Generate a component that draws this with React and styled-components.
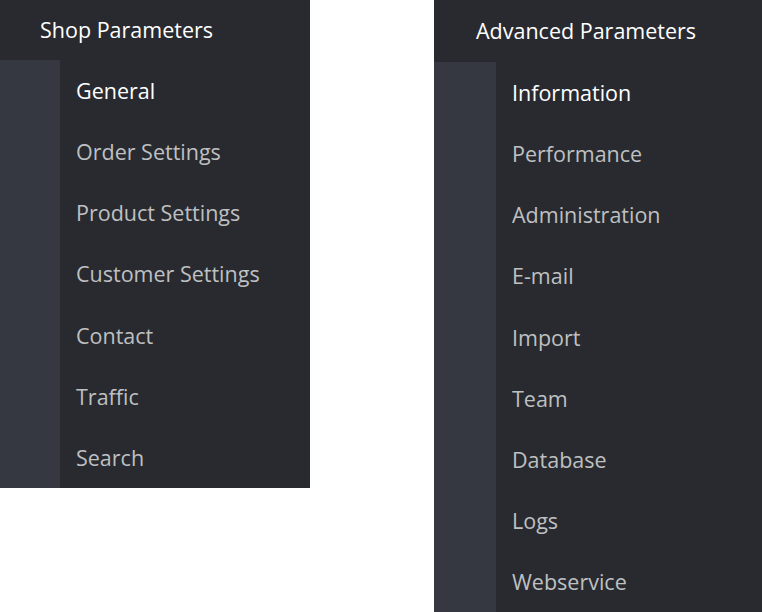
import React from "react";
import styled, { createGlobalStyle } from "styled-components";

const Global = createGlobalStyle`
  html, body { margin: 0; padding: 0; background: #ffffff; }
  body { font-family: "Open Sans", "Noto Sans", sans-serif; }
`;

const Page = styled.div`
  display: flex;
  align-items: flex-start;
  gap: 124px;
  width: 762px;
  height: 612px;
  overflow: hidden;
`;

const Panel = styled.nav`
  width: ${(p) => p.$width}px;
  background: #282a2f;
  display: flex;
  flex-direction: column;
  flex-shrink: 0;
`;

const Header = styled.div`
  height: ${(p) => p.$height}px;
  display: flex;
  align-items: center;
  padding-left: ${(p) => p.$indent}px;
  color: #ffffff;
  font-size: 21.5px;
  line-height: 1;
`;

const Body = styled.div`
  display: flex;
`;

const Strip = styled.div`
  width: ${(p) => p.$width}px;
  background: #353840;
  flex-shrink: 0;
`;

const List = styled.ul`
  list-style: none;
  margin: 0;
  padding: 0;
  flex: 1;
`;

const Item = styled.li`
  height: 61.2px;
  display: flex;
  align-items: center;
  padding-left: 16px;
  font-size: 21.5px;
  line-height: 1;
  color: ${(p) => (p.$active ? "#ffffff" : "#bfc0c2")};
`;

function Menu({ title, items, width, headerHeight, indent, strip }) {
  return (
    <Panel $width={width}>
      <Header $height={headerHeight} $indent={indent}>{title}</Header>
      <Body>
        <Strip $width={strip} />
        <List>
          {items.map((it, i) => (
            <Item key={it} $active={i === 0}>{it}</Item>
          ))}
        </List>
      </Body>
    </Panel>
  );
}

export default function App() {
  return (
    <>
      <Global />
      <Page>
        <Menu
          title="Shop Parameters"
          width={310}
          headerHeight={60}
          indent={40}
          strip={60}
          items={["General", "Order Settings", "Product Settings", "Customer Settings", "Contact", "Traffic", "Search"]}
        />
        <Menu
          title="Advanced Parameters"
          width={328}
          headerHeight={62}
          indent={42}
          strip={62}
          items={["Information", "Performance", "Administration", "E-mail", "Import", "Team", "Database", "Logs", "Webservice"]}
        />
      </Page>
    </>
  );
}
